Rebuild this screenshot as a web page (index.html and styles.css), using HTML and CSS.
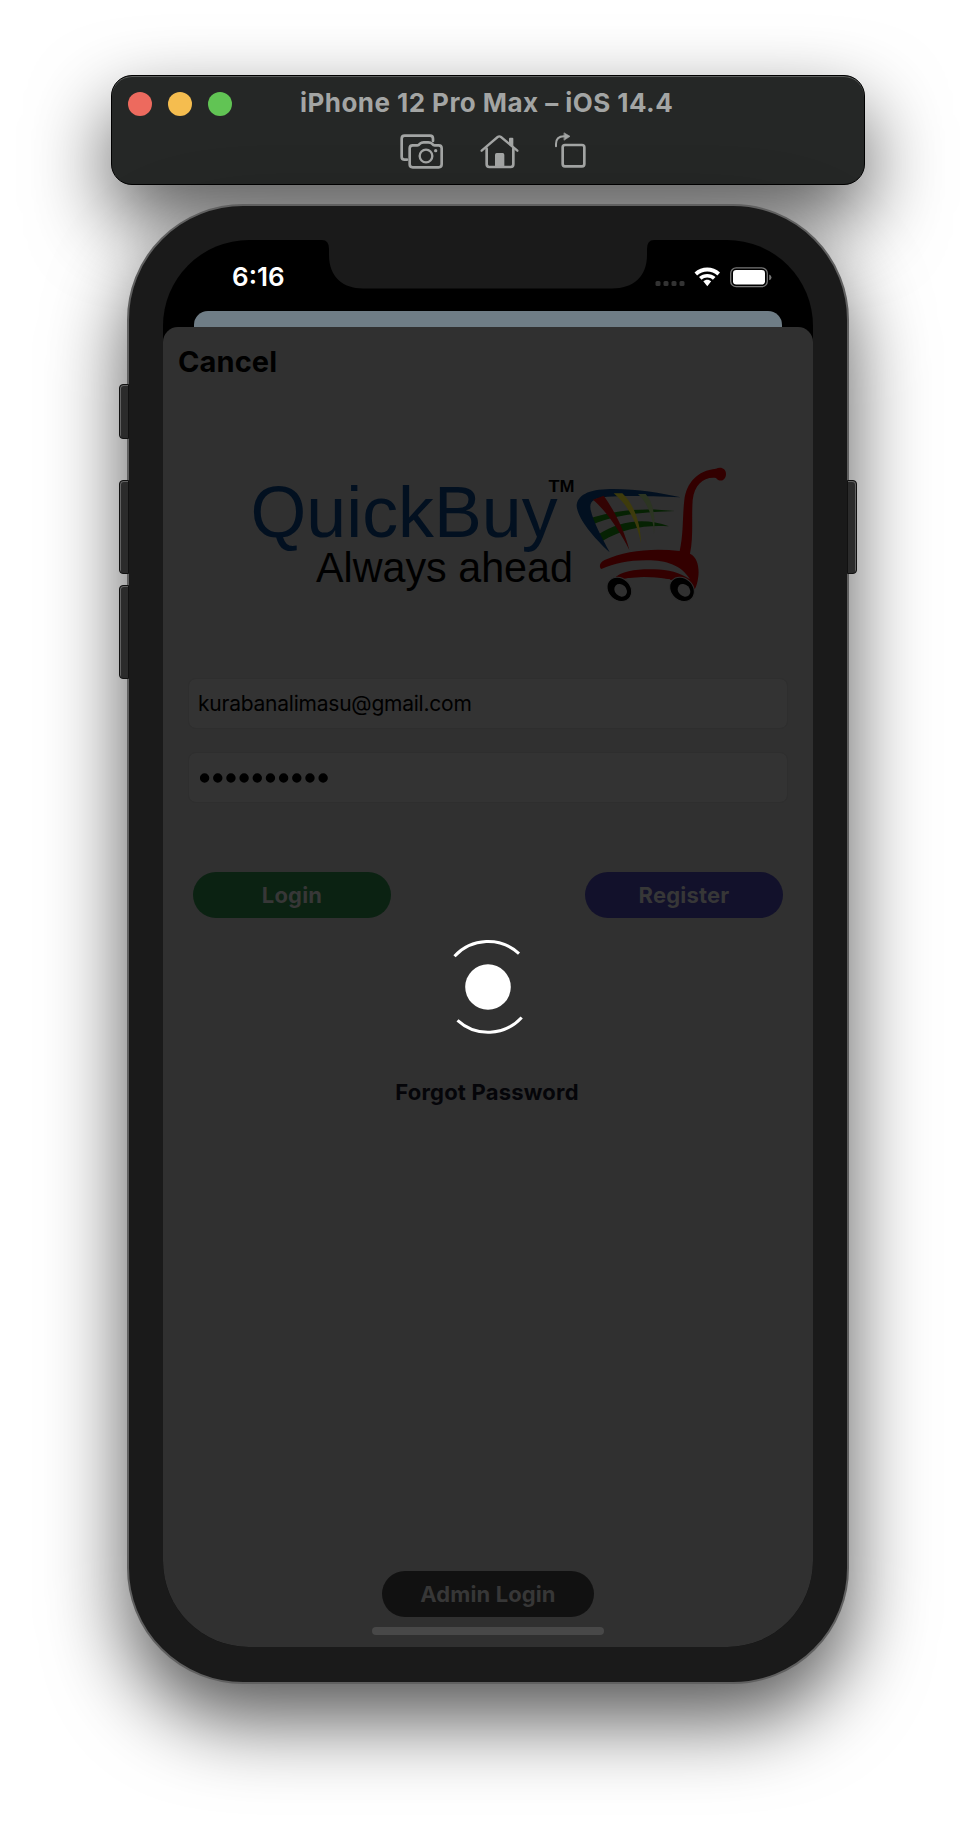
FILE: index.html
```html
<!DOCTYPE html>
<html lang="en">
<head>
<meta charset="utf-8">
<title>iPhone 12 Pro Max – iOS 14.4</title>
<link rel="stylesheet" href="styles.css">
</head>
<body>
<header class="window-bar">
  <div class="title-row">
    <div class="lights"><i class="light red"></i><i class="light yellow"></i><i class="light green"></i></div>
    <h1 class="title">iPhone 12 Pro Max – iOS 14.4</h1>
  </div>
  <div class="tools">
    <svg class="tool-icons" viewBox="0 0 570 120" fill="none" stroke="#a3a5a4" stroke-width="8" stroke-linejoin="round" stroke-linecap="round">
      <path d="M30 89H23Q14 89 14 80V26Q14 17 23 17H99Q108 17 108 26V33"/>
      <path d="M47 46H61Q65 46 69 41Q73 37 80 37H94Q101 37 105 41Q109 46 113 46H125Q134 46 134 55V103Q134 112 125 112H47Q38 112 38 103V55Q38 46 47 46Z"/>
      <circle cx="87" cy="78" r="19" stroke-width="7"/><circle cx="116" cy="62" r="5" fill="#a3a5a4" stroke="none"/>
      <path d="M254 62L302 21Q307 17 312 21L361 62" stroke-width="7"/>
      <path d="M269 56V103Q269 111 277 111H341Q349 111 349 103V56" stroke-width="8"/>
      <path d="M294 110V74Q294 69 299 69H317Q322 69 322 74V110Z" fill="#a3a5a4" stroke="none"/>
      <path d="M336 26Q336 23 339 23H346Q349 23 349 26V52L336 40Z" fill="#a3a5a4" stroke="none"/>
      <rect x="497" y="45" width="65" height="64" rx="7"/>
      <path d="M477 49V42Q477 19 501 19H504" stroke-width="6"/>
      <path d="M502 9L519 19L502 30Z" fill="#a3a5a4" stroke-width="2"/>
    </svg>
  </div>
</header>

<main class="phone">
  <i class="key mute"></i><i class="key vol-up"></i><i class="key vol-down"></i><i class="key power"></i>
  <div class="screen">
    <div class="status">
      <span class="clock">6:16</span>
      <svg class="notch" viewBox="0 0 332 49"><path d="M0 0H332Q325 0 325 9V15C325 37 311 48.500 290 48.500H41C21 48.500 7 37 7 15V9Q7 0 0 0Z" fill="#1a1a1a"/></svg>
      <svg class="signals" viewBox="0 0 118 22">
        <g fill="#333"><rect x="0.500" y="14" width="5" height="5" rx="1.500"/><rect x="8.500" y="14" width="5" height="5" rx="1.500"/><rect x="16.500" y="14" width="5" height="5" rx="1.500"/><rect x="24.500" y="14" width="5" height="5" rx="1.500"/></g>
        <path fill="#fff" d="M39.500 5.600C46.500-1.200 58-1.200 65 5.600L62.400 8.400C56.800 3.200 47.700 3.200 42.100 8.400ZM44 10.100C48.500 5.800 56 5.800 60.500 10.100L57.900 12.700C54.800 9.800 49.700 9.800 46.600 12.700ZM48.300 14.300C50.500 12.200 54 12.200 56.200 14.300L52.300 19.300Z"/>
        <rect x="75.700" y="0.900" width="36.600" height="18.800" rx="5.500" fill="none" stroke="#777" stroke-width="1.300"/>
        <rect x="78" y="3" width="32" height="14.500" rx="3.200" fill="#fff"/>
        <path d="M114.200 7.500Q116.500 8.500 116.500 10.400T114.200 13.200Z" fill="#777"/>
      </svg>
    </div>
    <div class="behind"></div>
    <section class="sheet">
      <a class="cancel">Cancel</a>
      <svg class="logo" viewBox="240 450 500 160">
        <text x="250.500" y="536.500" class="brand" textLength="307" lengthAdjust="spacingAndGlyphs">QuickBuy</text>
        <text x="316" y="582" class="slogan" textLength="257" lengthAdjust="spacingAndGlyphs">Always ahead</text>
        <text x="548.500" y="492" class="tm" textLength="26" lengthAdjust="spacingAndGlyphs">TM</text>
        <g transform="translate(560 450) scale(.33333)">
          <path fill="#062203" d="M92 204C165 180 250 172 345 183C260 186 165 193 100 223ZM117 252C175 215 250 200 327 229C255 224 190 235 127 273Z"/>
          <path fill="#021020" d="M149 307C98 260 53 205 50 168C51 136 85 118 150 117C230 116 300 128 362 142C270 138 190 136 142 140C98 144 87 155 92 180C101 218 124 259 149 307Z"/>
          <path fill="#330303" d="M99 149L131 137C161 178 193 240 208 300C180 243 139 183 99 149Z"/>
          <path fill="#3e3b0c" d="M161 130H187C221 163 242 216 243 280C231 217 205 166 161 130Z"/>
          <path fill="#2c3522" d="M234 132H257C279 155 287 200 282 250C280 205 264 159 234 132Z"/>
          <path fill="#330000" d="M359 303C371 250 367 200 373 150C379 99 412 61 468 56C481 49 498 54 498 72C498 91 480 99 468 84C431 80 404 103 398 150C394 206 401 259 390 311C412 322 418 350 415 379C413 397 409 410 404 418L376 390L161 387C185 361 231 357 282 358C325 359 360 368 390 388C363 344 316 330 257 331C205 331 163 341 124 357C116 350 119 337 134 330C196 301 280 293 359 303Z"/>
          <path fill="#303030" d="M185 386Q260 375 330 388L330 400H195Z"/>
          <path fill="#330000" d="M161 386C205 355 320 348 389 389L360 395C300 377 245 378 190 386Z"/>
          <g stroke="#303030" stroke-width="3"><ellipse cx="178" cy="418" rx="40" ry="33" transform="rotate(42 178 418)" fill="#000"/><ellipse cx="366" cy="418" rx="40" ry="33" transform="rotate(42 366 418)" fill="#000"/></g>
          <g fill="#303030"><ellipse cx="182" cy="421" rx="21" ry="17" transform="rotate(45 182 421)"/><ellipse cx="372" cy="421" rx="21" ry="17" transform="rotate(45 372 421)"/></g>
        </g>
      </svg>
      <div class="fields">
        <div class="field"><span class="email">kurabanalimasu@gmail.com</span></div>
        <div class="field">
          <svg class="dots" viewBox="0 0 130 10"><path d="M4.600 5H124" stroke="#000" stroke-width="9.400" stroke-linecap="round" stroke-dasharray="0 13.170"/></svg>
        </div>
      </div>
      <div class="actions">
        <a class="pill login">Login</a>
        <a class="pill register">Register</a>
      </div>
      <svg class="spinner" viewBox="0 0 96 96"><circle cx="48" cy="48" r="22.800" fill="#fff"/><path d="M14.500 17.300A45.500 45.500 0 0 1 79 14.700M17.500 81.300A45.500 45.500 0 0 0 81.700 78.500" fill="none" stroke="#fff" stroke-width="3"/></svg>
      <a class="forgot">Forgot Password</a>
      <a class="pill admin">Admin Login</a>
      <i class="home-line"></i>
    </section>
  </div>
</main>
</body>
</html>
```
FILE: styles.css
```css
* { box-sizing: border-box; }
body { margin: 0; width: 976px; height: 1832px; padding-top: 75px; overflow: hidden; background: #fff; font-family: Inter, "Liberation Sans", sans-serif; }
.window-bar { width: 754px; height: 110px; margin-left: 111px; border: 1px solid #000; border-radius: 21px; background: #252726; box-shadow: inset 0 1px 0 #5c5e5d, 0 34px 80px rgba(0,0,0,.66); }
.title-row { display: flex; align-items: center; padding: 14px 0 0 16px; height: 42px; }
.lights { display: flex; gap: 16px; width: 172px; }
.light { width: 24px; height: 24px; border-radius: 50%; }
.red { background: #ed6a5e; }
.yellow { background: #f5bd4f; }
.green { background: #61c454; }
.title { margin: -3px 0 0; color: #a3a5a4; font-size: 26px; line-height: 30px; font-weight: 700; letter-spacing: .45px; white-space: nowrap; }
.tools { padding: 12px 0 0 285px; }
.tool-icons { display: block; width: 190px; height: 40px; }

.phone { position: relative; width: 722px; height: 1480px; margin: 19px 0 0 127px; padding: 34px 34px; border: 2px solid #606060; border-radius: 116px; background: #1a1a1a; box-shadow: 0 36px 80px rgba(0,0,0,.66); }
.key { position: absolute; left: -10px; width: 10px; border: 1px solid #111; box-shadow: inset 1px 1px 0 #626262; border-radius: 4px 0 0 4px; background: #2b2b2b; }
.mute { top: 178px; height: 55px; }
.vol-up { top: 274px; height: 94px; }
.vol-down { top: 379px; height: 94px; }
.power { top: 274px; height: 94px; left: auto; right: -10px; border-radius: 0 4px 4px 0; box-shadow: inset -1px 1px 0 #626262; }

.screen { width: 650px; height: 1407px; border-radius: 86px; overflow: hidden; background: #000; }
.status { display: flex; height: 71px; }
.clock { width: 159px; padding: 22px 0 0 69px; color: #fff; font-size: 26px; line-height: 30px; font-weight: 600; }
.notch { width: 332px; height: 49px; }
.signals { width: 118px; height: 22px; margin: 27px 0 0 1px; }
.behind { width: 588px; height: 16px; margin: 0 auto; border-radius: 14px 14px 0 0; background: #6f7d86; }
.sheet { display: flex; flex-direction: column; height: 1320px; border-radius: 15px 15px 0 0; background: #303030; }
.cancel { height: 123px; padding: 16px 0 0 15px; color: #000; font-size: 29px; line-height: 38px; font-weight: 650; letter-spacing: .1px; }
.logo { width: 500px; height: 160px; margin-left: 77px; }
.brand { font: 73px "Liberation Sans", sans-serif; fill: #021020; }
.slogan { font: 43px "Liberation Sans", sans-serif; fill: #000; }
.tm { font: 600 17px "Liberation Sans", sans-serif; fill: #000; }
.fields { display: flex; flex-direction: column; gap: 23px; padding: 68px 25px 0; }
.field { display: flex; align-items: center; height: 51px; padding-left: 9px; border-radius: 8px; border: 1px solid #2e2e2e; background: #333; }
.email { color: #000; font-size: 21px; line-height: 26px; letter-spacing: -.23px; }
.dots { width: 130px; height: 10px; margin-left: 2px; }
.actions { display: flex; justify-content: space-between; padding: 69px 30px 0; }
.pill { display: flex; align-items: center; justify-content: center; width: 198px; height: 46px; border-radius: 23px; color: #373737; font-size: 22px; font-weight: 700; letter-spacing: .2px; }
.login { background: #0b2212; }
.register { background: #12112b; }
.spinner { width: 96px; height: 96px; margin: 21px 0 0 277px; }
.forgot { margin: 41px 0 1px; padding-right: 2px; text-align: center; color: #050509; font-size: 22px; line-height: 32px; font-weight: 700; letter-spacing: .2px; }
.admin { width: 212px; margin: 462px 0 0 219px; background: #111; letter-spacing: .1px; }
.home-line { width: 232px; height: 8px; margin: 10px 0 0 209px; border-radius: 4px; background: #484848; }
```
